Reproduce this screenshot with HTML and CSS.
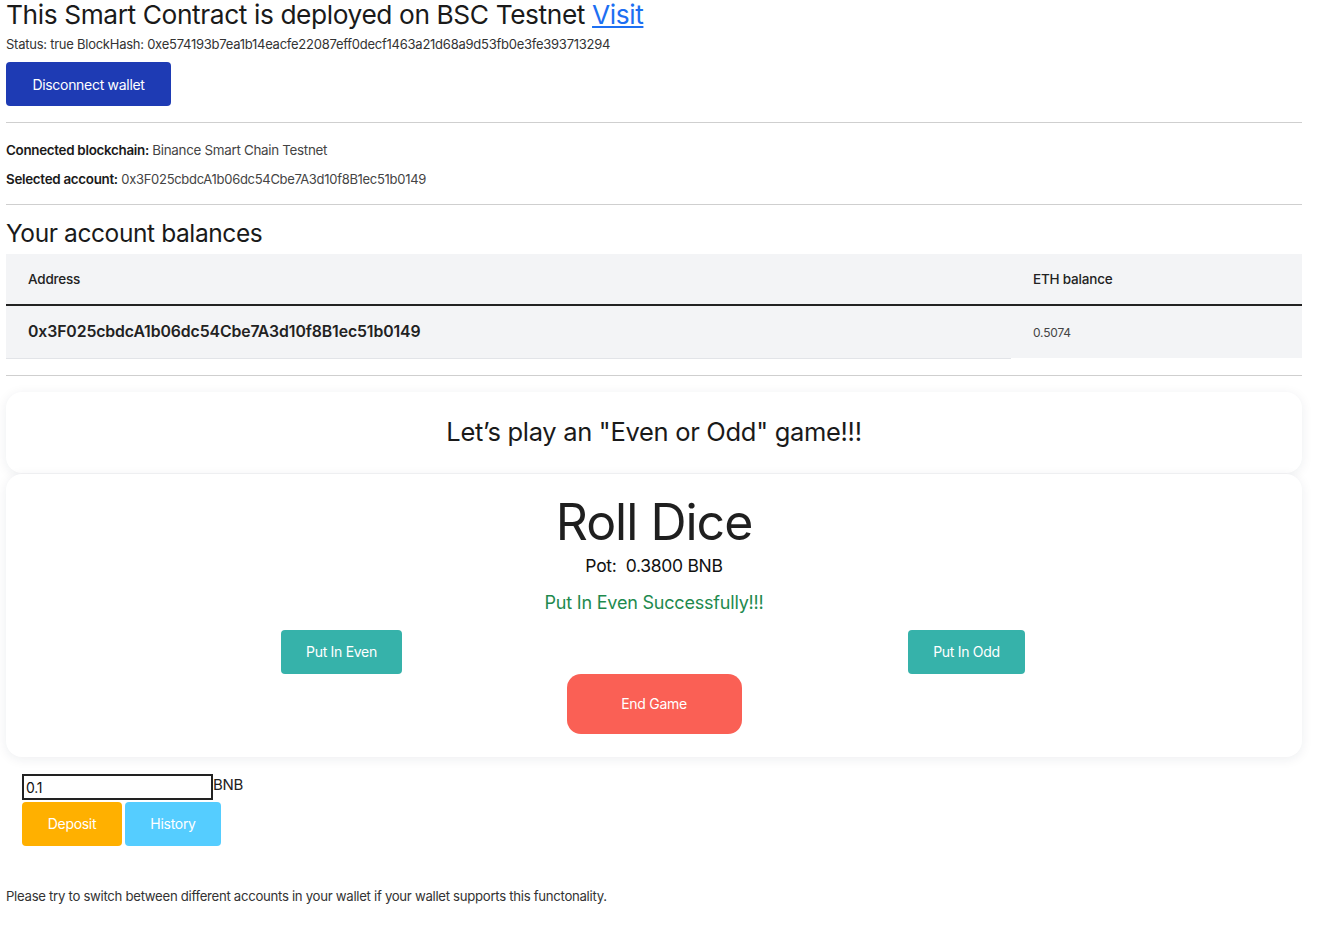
FILE: index.html
```html
<!DOCTYPE html>
<html lang="en">
<head>
<meta charset="utf-8">
<title>Even or Odd</title>
<link rel="stylesheet" href="styles.css">
</head>
<body>
<div class="page">
  <h1 class="title">This Smart Contract is deployed on BSC Testnet <a href="#" class="visit">Visit</a></h1>
  <p class="status">Status: true BlockHash: 0xe574193b7ea1b14eacfe22087eff0decf1463a21d68a9d53fb0e3fe393713294</p>
  <button class="btn btn-disconnect">Disconnect wallet</button>
  <hr class="rule rule-1">
  <p class="info"><span class="label">Connected blockchain:</span> Binance Smart Chain Testnet</p>
  <p class="info"><span class="label">Selected account:</span> <span class="value-narrow">0x3F025cbdcA1b06dc54Cbe7A3d10f8B1ec51b0149</span></p>
  <hr class="rule rule-2">
  <h2 class="balances-title">Your account balances</h2>
  <table class="balances">
    <thead>
      <tr><th class="col-address">Address</th><th class="col-balance">ETH balance</th></tr>
    </thead>
    <tbody>
      <tr><td class="cell-address">0x3F025cbdcA1b06dc54Cbe7A3d10f8B1ec51b0149</td><td class="cell-balance">0.5074</td></tr>
    </tbody>
  </table>
  <hr class="rule rule-3">
  <div class="card card-intro">
    <p class="intro">Let’s play an "Even or Odd" game!!!</p>
  </div>
  <div class="card card-game">
    <h2 class="game-title">Roll Dice</h2>
    <p class="pot">Pot:&nbsp; 0.3800 BNB</p>
    <p class="success">Put In Even Successfully!!!</p>
    <div class="choices">
      <div class="choice"><button class="btn btn-teal btn-even">Put In Even</button></div>
      <div class="choice"><button class="btn btn-teal btn-odd">Put In Odd</button></div>
    </div>
    <div class="end-row"><button class="btn btn-end">End Game</button></div>
  </div>
  <div class="deposit">
    <div class="amount-row"><input class="amount" type="text" value="0.1"><span class="unit">BNB</span></div>
    <div class="deposit-buttons">
      <button class="btn btn-deposit">Deposit</button>
      <button class="btn btn-history">History</button>
    </div>
  </div>
  <p class="footer-note">Please try to switch between different accounts in your wallet if your wallet supports this functonality.</p>
</div>
</body>
</html>
```
FILE: styles.css
```css
* { box-sizing: border-box; }
html, body { margin: 0; padding: 0; background: #fff; }
body {
  font-family: Inter, "Noto Sans", "Liberation Sans", sans-serif;
  color: #1f1f1f;
}
.page {
  width: 1296px;
  margin-left: 6px;
  padding-bottom: 20px;
}
.title {
  margin: 0;
  font-size: 26.3px;
  font-weight: 400;
  line-height: 30px;
  letter-spacing: -0.4px;
  color: #1a1a1a;
}
.visit { color: #1d6ff2; text-decoration: underline; }
.status {
  margin: 6px 0 0;
  font-size: 13px;
  line-height: 16px;
  color: #333;
  letter-spacing: -0.25px;
}
.btn {
  font-family: inherit;
  border: none;
  color: #fff;
  cursor: pointer;
  letter-spacing: -0.3px;
}
.btn-disconnect {
  margin-top: 10px;
  width: 165px;
  height: 44px;
  background: #1e3bb4;
  border-radius: 4px;
  font-size: 14px;
  display: block;
}
.rule {
  border: none;
  border-top: 1px solid #cfcfcf;
  margin: 0;
}
.rule-1 { margin-top: 16px; }
.info {
  margin: 0;
  font-size: 13.4px;
  line-height: 16px;
  color: #444;
  letter-spacing: -0.3px;
}
.value-narrow { font-size: 13px; }
.rule-1 + .info { margin-top: 19px; }
.info + .info { margin-top: 13px; }
.label { color: #1a1a1a; font-weight: 600; }
.rule-2 { margin-top: 17px; }
.balances-title {
  margin: 13px 0 0;
  font-size: 24.5px;
  font-weight: 400;
  line-height: 30px;
  letter-spacing: -0.4px;
  color: #1a1a1a;
}
.balances {
  width: 100%;
  border-collapse: collapse;
  margin-top: 6px;
}
.balances th {
  background: #f3f4f6;
  height: 51px;
  text-align: left;
  font-weight: 500;
  font-size: 13.5px;
  color: #222;
  border-bottom: 2px solid #222;
  padding: 0 22px;
  letter-spacing: -0.2px;
}
.balances td {
  background: #f3f4f6;
  height: 53px;
  padding: 0 22px;
}
.col-balance, .cell-balance { width: 291px; }
.cell-address {
  font-size: 15.8px;
  font-weight: 600;
  color: #222;
  border-bottom: 1px solid #e2e4e8;
  letter-spacing: -0.1px;
}
.cell-balance {
  font-size: 12px;
  color: #444;
  letter-spacing: -0.2px;
}
.rule-3 { margin-top: 16px; }
.card {
  background: #fff;
  border-radius: 16px;
  box-shadow: 0 2px 12px rgba(30, 40, 60, 0.08);
}
.card-intro {
  margin-top: 16px;
  height: 81px;
  display: flex;
  align-items: center;
  justify-content: center;
}
.intro {
  margin: 0;
  font-size: 25.5px;
  line-height: 30px;
  letter-spacing: -0.3px;
  color: #1a1a1a;
}
.card-game {
  margin-top: 1px;
  height: 283px;
  padding: 18px 23px 0;
  text-align: center;
}
.game-title {
  margin: 0;
  font-size: 50px;
  font-weight: 400;
  line-height: 60px;
  letter-spacing: -1px;
  color: #1f1f1f;
}
.pot {
  margin: 3px 0 0;
  font-size: 17.5px;
  line-height: 22px;
  color: #111;
  letter-spacing: -0.3px;
}
.success {
  margin: 15px 0 0;
  font-size: 18px;
  line-height: 22px;
  color: #1e8a4e;
  letter-spacing: -0.2px;
}
.choices {
  display: grid;
  grid-template-columns: 1fr 1fr;
  margin-top: 16px;
}
.choice { display: flex; justify-content: center; }
.btn-teal {
  height: 44px;
  background: #36b2aa;
  border-radius: 4px;
  font-size: 14px;
}
.btn-even { width: 121px; }
.btn-odd { width: 117px; }
.end-row { display: flex; justify-content: center; }
.btn-end {
  width: 175px;
  height: 60px;
  background: #fa6055;
  border-radius: 14px;
  font-size: 14px;
}
.deposit {
  margin-top: 17px;
  padding-left: 16px;
}
.amount-row { display: flex; align-items: flex-start; }
.amount {
  width: 191px;
  height: 26px;
  border: 2px solid #222;
  border-radius: 0;
  padding: 2px 2px 0;
  font-family: inherit;
  font-size: 14px;
  color: #111;
  letter-spacing: -0.3px;
}
.unit {
  font-size: 15px;
  line-height: 20px;
  margin-top: 1px;
  color: #222;
  letter-spacing: -0.3px;
}
.deposit-buttons {
  display: flex;
  gap: 3px;
  margin-top: 2px;
}
.btn-deposit {
  width: 100px;
  height: 44px;
  background: #ffb000;
  border-radius: 4px;
  font-size: 14px;
}
.btn-history {
  width: 96px;
  height: 44px;
  background: #55cdff;
  border-radius: 4px;
  font-size: 14px;
}
.footer-note {
  margin: 42px 0 0;
  font-size: 13.2px;
  line-height: 16px;
  color: #333;
  letter-spacing: -0.3px;
}
```
